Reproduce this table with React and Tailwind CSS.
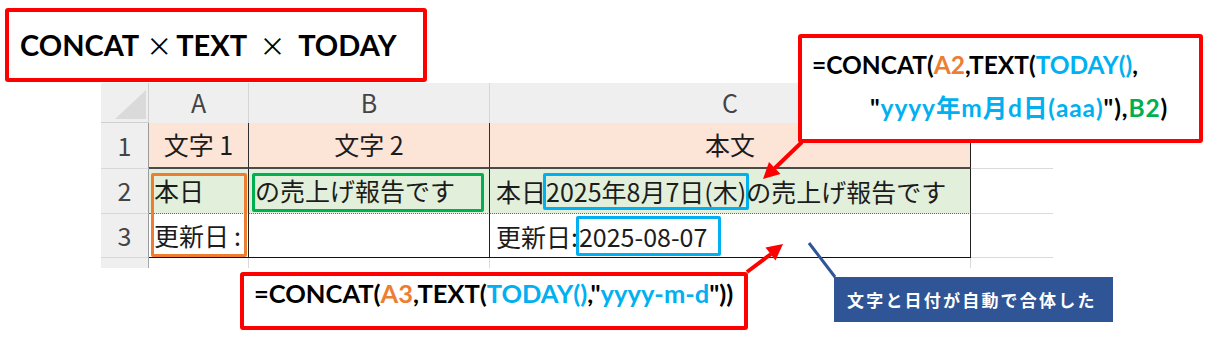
import React from 'react';

const cellFont = "font-['Noto_Sans_CJK_JP',sans-serif]";
const boldFont = "font-['Lato','Noto_Sans_CJK_JP',sans-serif]";

function ColHead({ children, last }) {
  return (
    <div
      className={
        'flex items-center justify-center bg-[#EFEFEF] text-[25px] text-[#444] ' +
        (last ? '' : 'border-r border-[#D6D6D6]')
      }
    >
      {children}
    </div>
  );
}

function RowHead({ children }) {
  return (
    <div className="flex items-center justify-center bg-[#EFEFEF] text-[25px] text-[#444] border-r border-r-[#9A9A9A] border-b border-b-[#D8D8D8]">
      {children}
    </div>
  );
}

function Sheet() {
  return (
    <div className={'relative ml-[101px] mt-[1px] w-[952px] ' + cellFont}>
      <div className="grid grid-cols-[48px_100px_241px_481px_82px] grid-rows-[40px_46px_45px_44px_10px] text-[25px] text-[#1c1c1c] whitespace-nowrap">
        {/* header row */}
        <div className="relative bg-[#EFEFEF] border-r border-b border-[#CFCFCF]">
          <svg width="48" height="40" className="absolute left-0 top-0">
            <polygon points="14,36 45,36 45,7" fill="#DADADA" />
          </svg>
        </div>
        <ColHead>A</ColHead>
        <ColHead>B</ColHead>
        <ColHead>C</ColHead>
        <ColHead last />

        {/* row 1 */}
        <RowHead>1</RowHead>
        <div className="flex items-center justify-center bg-[#FCE4D6] border-r border-r-[#303030] border-b-2 border-b-[#4A4A4A]">文字 1</div>
        <div className="flex items-center justify-center bg-[#FCE4D6] border-r border-r-[#303030] border-b-2 border-b-[#4A4A4A]">文字 2</div>
        <div className="flex items-center justify-center bg-[#FCE4D6] border-r border-r-[#202020] border-b-2 border-b-[#4A4A4A]">本文</div>
        <div className="bg-white border-b border-[#DADADA]" />

        {/* row 2 */}
        <RowHead>2</RowHead>
        <div className="flex items-center px-[5px] bg-[#E2EFDA] border-r border-r-[#202020] border-b border-b-[#6A6A6A] [border-bottom-style:dotted]">本日</div>
        <div className="relative flex items-center px-[6px] bg-[#E2EFDA] border-r border-r-[#202020] border-b border-b-[#6A6A6A] [border-bottom-style:dotted]">
          の売上げ報告です
          <div className="absolute left-[3px] right-[5px] top-[4px] bottom-[1px] border-[3px] border-[#00B050] rounded-[2px]" />
        </div>
        <div className="flex items-center px-[6px] bg-[#E2EFDA] border-r border-r-[#202020] border-b border-b-[#6A6A6A] [border-bottom-style:dotted]">
          <div className="leading-[31px]">
            本日
            <span className="inline-block -mx-[3px] h-[37px] border-[3px] border-[#00B0F0] rounded-[2px] leading-[31px]">2025年8月7日(木)</span>
            の売上げ報告です
          </div>
        </div>
        <div className="bg-white border-b border-[#DADADA]" />

        {/* row 3 */}
        <RowHead>3</RowHead>
        <div className="flex items-center px-[5px] bg-white border-r border-r-[#202020] border-b border-b-[#111]">
          更新日<span className="ml-[5px]">:</span>
        </div>
        <div className="bg-white border-r border-r-[#202020] border-b border-b-[#111]" />
        <div className="flex items-center px-[6px] bg-white border-r border-r-[#202020] border-b border-b-[#111]">
          <div className="leading-[34px]">
            更新日:
            <span className="inline-block -ml-[2px] pr-[11px] h-[40px] border-[3px] border-[#00B0F0] rounded-[2px] leading-[34px]">2025-08-07</span>
          </div>
        </div>
        <div className="bg-white border-b border-[#DADADA]" />

        {/* row 4, cut off */}
        <div className="bg-[#EFEFEF] border-r border-[#A8A8A8]" />
        <div className="bg-white border-r border-[#DADADA]" />
        <div className="bg-white border-r border-[#DADADA]" />
        <div className="bg-white border-r border-[#DADADA]" />
        <div className="bg-white" />
      </div>

      {/* A2:A3 highlight */}
      <div className="absolute left-[50px] top-[90px] w-[96px] h-[84px] border-[3px] border-[#ED7D31] rounded-[2px]" />
    </div>
  );
}

export default function App() {
  return (
    <div className="relative w-[1211px] h-[339px] overflow-hidden bg-white">
      {/* title */}
      <div className="ml-[5px] mt-[8px] w-[422px] h-[74px] flex items-center pl-[11px] border-4 border-[#FF0000] rounded-[3px] bg-white text-black">
        <div className={'whitespace-nowrap text-[29px] font-bold ' + boldFont}>
          CONCAT
          <span className="inline-block w-[37px] pl-[3px] text-center font-normal text-[26px] font-['Noto_Sans_CJK_JP',sans-serif]">×</span>
          TEXT
          <span className="inline-block w-[51px] text-center font-normal text-[26px] font-['Noto_Sans_CJK_JP',sans-serif]">×</span>
          TODAY
        </div>
      </div>

      <Sheet />

      {/* formula for C2 */}
      <div className={'absolute left-[798px] top-[34px] w-[405px] h-[109px] pl-[10px] pt-[5px] border-4 border-[#FF0000] rounded-[3px] bg-white text-[24.5px] font-bold leading-[43px] text-black whitespace-nowrap ' + boldFont}>
        <div>
          =CONCAT(<span className="text-[#ED7D31]">A2</span>,TEXT(<span className="text-[#00B0F0]">TODAY()</span>,
        </div>
        <div className="pl-[58px] tracking-[0.9px]">
          "<span className="text-[#00B0F0]">yyyy年m月d日(aaa)</span>"),<span className="text-[#00B050]">B2</span>)
        </div>
      </div>

      {/* formula for C3 */}
      <div className={'absolute left-[240px] top-[272px] w-[508px] h-[58px] pl-[10px] pt-[1px] border-4 border-[#FF0000] rounded-[3px] bg-white text-[25.5px] font-bold leading-[30px] text-black whitespace-nowrap ' + boldFont}>
        <div className="pt-[1px]">
          =CONCAT(<span className="text-[#ED7D31]">A3</span>,TEXT(<span className="text-[#00B0F0]">TODAY()</span>,"<span className="text-[#00B0F0]">yyyy-m-d</span>"))
        </div>
      </div>

      {/* note */}
      <div className="absolute left-[834px] top-[277px] w-[279px] h-[45px] pl-[13px] flex items-center bg-[#2F5597] text-white text-[17px] font-bold tracking-[2.2px] font-['Noto_Sans_CJK_JP',sans-serif]">
        文字と日付が自動で合体した
      </div>

      {/* arrows */}
      <svg className="absolute left-0 top-0 pointer-events-none" width="1211" height="339">
        <line x1="802" y1="142" x2="775" y2="168" stroke="#FF0000" strokeWidth="4" />
        <polygon points="763,179 780.5,174 769,162" fill="#FF0000" />
        <line x1="747" y1="272" x2="771" y2="254" stroke="#FF0000" strokeWidth="4" />
        <polygon points="783,244 775.5,260.5 765.5,247.5" fill="#FF0000" />
        <line x1="809" y1="243" x2="835" y2="277" stroke="#2F5597" strokeWidth="3" />
      </svg>
    </div>
  );
}
